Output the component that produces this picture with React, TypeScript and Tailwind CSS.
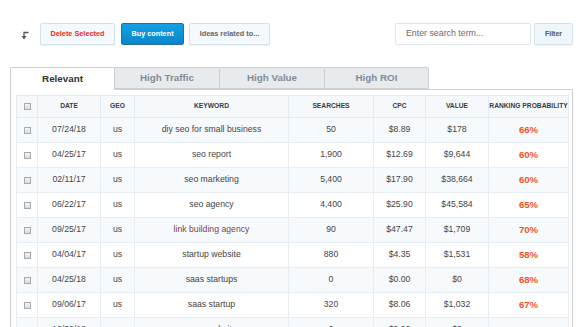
import React from "react";

const rows: string[][] = [
  ["07/24/18", "us", "diy seo for small business", "50", "$8.89", "$178", "66%"],
  ["04/25/17", "us", "seo report", "1,900", "$12.69", "$9,644", "60%"],
  ["02/11/17", "us", "seo marketing", "5,400", "$17.90", "$38,664", "60%"],
  ["06/22/17", "us", "seo agency", "4,400", "$25.90", "$45,584", "65%"],
  ["09/25/17", "us", "link building agency", "90", "$47.47", "$1,709", "70%"],
  ["04/04/17", "us", "startup website", "880", "$4.35", "$1,531", "58%"],
  ["04/25/18", "us", "saas startups", "0", "$0.00", "$0", "68%"],
  ["09/06/17", "us", "saas startup", "320", "$8.06", "$1,032", "67%"],
  ["10/30/18", "us", "saas website", "0", "$0.00", "$0", "60%"],
];

function Box() {
  return (
    <div className="mx-auto h-[7px] w-[7px] border border-[#a9a9a9] bg-gradient-to-b from-[#f4f4f4] to-[#dcdcdc]" />
  );
}

const th = "border border-[#e3ebf0] text-[6.7px] font-bold text-[#3a3a3a] text-center align-middle";
const td = "border border-[#e6eef3] text-center align-middle";

export default function App() {
  return (
    <div className="w-[587px] h-[327px] overflow-hidden bg-white font-['Liberation_Sans',Arial,sans-serif] text-[#454545]">
      {/* toolbar */}
      <div className="flex items-center pt-[23px] pl-[21px] pr-[14px] h-[45px]">
        <svg width="8" height="9" viewBox="0 0 8 9" className="mt-[2px]">
          <path d="M7.5 1.5 H3 V5.5" fill="none" stroke="#555" strokeWidth="1.3" />
          <path d="M0.5 5 L3 8.6 L5.5 5 Z" fill="#555" />
        </svg>
        <button className="ml-[11px] h-[22px] w-[75px] rounded-[2px] border border-[#d3e3ec] bg-[#f3f9fd] text-[7.3px] font-bold text-[#ee2a1f] shadow-[0_1px_1px_rgba(0,0,0,0.06)]">
          Delete Selected
        </button>
        <button className="ml-[6px] h-[22px] w-[63px] rounded-[2px] border border-[#2a6f9c] bg-gradient-to-b from-[#14a0e2] to-[#0a86cb] text-[7.3px] font-bold text-white">
          Buy content
        </button>
        <button className="ml-[5px] h-[22px] w-[81px] rounded-[2px] border border-[#d3e3ec] bg-[#f3f9fd] text-[7.3px] font-bold text-[#666] shadow-[0_1px_1px_rgba(0,0,0,0.06)]">
          Ideas related to...
        </button>
        <div className="flex-1" />
        <div className="flex h-[22px] w-[136px] items-center rounded-[2px] border border-[#dfe6ea] bg-white pl-[10px] text-[8.8px] text-[#6b6b6b]">
          Enter search term...
        </div>
        <button className="ml-[3px] h-[22px] w-[39px] rounded-[2px] border border-[#d3e3ec] bg-[#eef7fc] text-[7px] font-bold text-[#555] shadow-[0_1px_1px_rgba(0,0,0,0.06)]">
          Filter
        </button>
      </div>

      {/* tabs */}
      <div className="ml-[10px] mt-[22px] w-[563px]">
        <div className="flex h-[22px]">
          <div className="relative z-10 flex h-[23px] w-[105px] items-center justify-center rounded-t-[2px] border border-b-0 border-[#cfcfcf] bg-white text-[9.8px] font-bold text-[#333]">
            Relevant
          </div>
          <div className="flex h-[22px] w-[106px] ml-[-1px] items-center justify-center rounded-t-[2px] border border-[#cfcfcf] bg-[#e8ebee] text-[9.8px] font-bold text-[#7f8d99]">
            High Traffic
          </div>
          <div className="flex h-[22px] w-[106px] ml-[-1px] items-center justify-center rounded-t-[2px] border border-[#cfcfcf] bg-[#e8ebee] text-[9.8px] font-bold text-[#7f8d99]">
            High Value
          </div>
          <div className="flex h-[22px] w-[105px] ml-[-1px] items-center justify-center rounded-t-[2px] border border-[#cfcfcf] bg-[#e8ebee] text-[9.8px] font-bold text-[#7f8d99]">
            High ROI
          </div>
        </div>
        <div className="border border-[#cfcfcf] px-[5px] pt-[5px] pb-[10px]">
          <table className="w-[552px] table-fixed border-collapse">
            <colgroup>
              <col className="w-[21px]" />
              <col className="w-[63px]" />
              <col className="w-[34px]" />
              <col className="w-[154px]" />
              <col className="w-[85px]" />
              <col className="w-[52px]" />
              <col className="w-[63px]" />
              <col className="w-[80px]" />
            </colgroup>
            <thead>
              <tr className="h-[22px] bg-[#f5f9fc]">
                <th className={th}><Box /></th>
                <th className={th}>DATE</th>
                <th className={th}>GEO</th>
                <th className={th}>KEYWORD</th>
                <th className={th}>SEARCHES</th>
                <th className={th}>CPC</th>
                <th className={th}>VALUE</th>
                <th className={th + " whitespace-nowrap"}>RANKING PROBABILITY</th>
              </tr>
            </thead>
            <tbody className="text-[8.7px]">
              {rows.map((r, i) => (
                <tr key={i} className={"h-[25px] " + (i % 2 === 0 ? "bg-[#f6fafd]" : "bg-white")}>
                  <td className={td}><Box /></td>
                  <td className={td}>{r[0]}</td>
                  <td className={td}>{r[1]}</td>
                  <td className={td + (r[2] === "link building agency" ? " text-[#83404f]" : "")}>{r[2]}</td>
                  <td className={td}>{r[3]}</td>
                  <td className={td}>{r[4]}</td>
                  <td className={td}>{r[5]}</td>
                  <td className={td + " text-[9.6px] font-bold text-[#f4511e]"}>{r[6]}</td>
                </tr>
              ))}
            </tbody>
          </table>
        </div>
      </div>
    </div>
  );
}
